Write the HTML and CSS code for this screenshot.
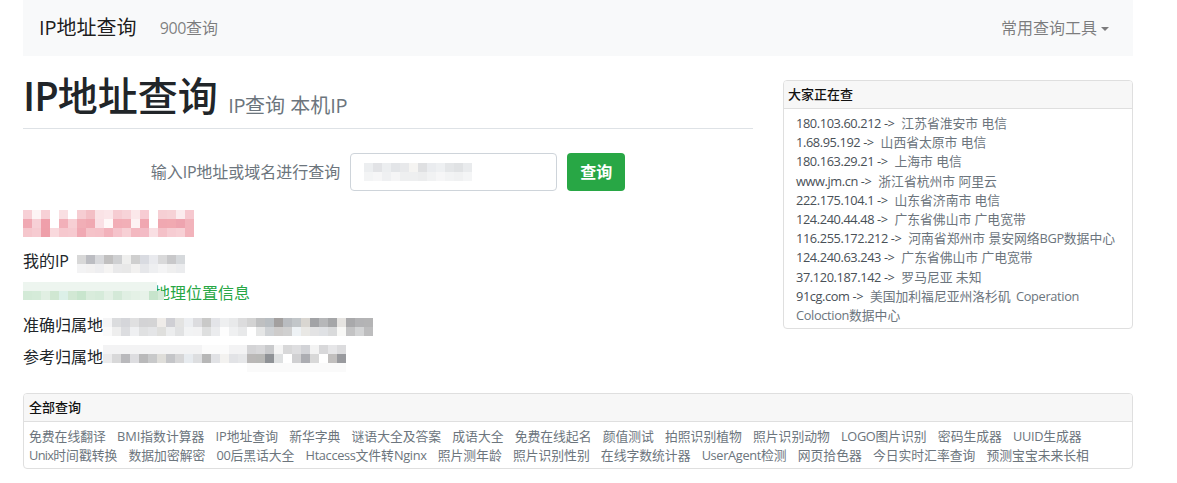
FILE: index.html
```html
<!DOCTYPE html>
<html lang="zh-CN">
<head>
<meta charset="utf-8">
<title>IP地址查询</title>
<link rel="stylesheet" href="styles.css">
</head>
<body>
<div class="container">
  <nav class="navbar">
    <a class="brand" href="#">IP地址查询</a>
    <a class="nav-link" href="#"><span class="lat">900</span>查询</a>
    <a class="nav-link tools" href="#">常用查询工具<span class="caret"></span></a>
  </nav>
  <div class="main">
    <div class="left">
      <h1 class="title"><span class="title-ip">IP</span>地址查询 <small><span class="lat">IP</span>查询 本机<span class="lat">IP</span></small></h1>
      <form class="query">
        <label class="query-label">输入<span class="lat">IP</span>地址或域名进行查询</label>
        <div class="input">
          <svg class="mosaic" width="108" height="18" viewBox="0 0 12 2" shape-rendering="crispEdges">
            <rect width="1" height="1" fill="#eceef0"/><rect x="1" width="1" height="1" fill="#e2e3e6"/><rect x="2" width="1" height="1" fill="#eceef0"/><rect x="3" width="1" height="1" fill="#e3e5e8"/><rect x="4" width="1" height="1" fill="#e8e9eb"/><rect x="5" width="1" height="1" fill="#f5f4f2"/><rect x="6" width="1" height="1" fill="#dfe0e2"/><rect x="7" width="1" height="1" fill="#eaecef"/><rect x="8" width="1" height="1" fill="#eef0f2"/><rect x="9" width="1" height="1" fill="#e4e6e8"/><rect x="10" width="1" height="1" fill="#e0e2e4"/><rect x="11" width="1" height="1" fill="#e9ebed"/>
            <rect y="1" width="1" height="1" fill="#f3f4f5"/><rect x="1" y="1" width="1" height="1" fill="#f6f6f7"/><rect x="2" y="1" width="1" height="1" fill="#eff0f2"/><rect x="3" y="1" width="1" height="1" fill="#f5f5f6"/><rect x="4" y="1" width="1" height="1" fill="#eeeff0"/><rect x="5" y="1" width="1" height="1" fill="#eeeff0"/><rect x="6" y="1" width="1" height="1" fill="#ecedee"/><rect x="7" y="1" width="1" height="1" fill="#f1f2f3"/><rect x="8" y="1" width="1" height="1" fill="#f6f6f7"/><rect x="9" y="1" width="1" height="1" fill="#f2f3f4"/><rect x="10" y="1" width="1" height="1" fill="#f0f1f2"/><rect x="11" y="1" width="1" height="1" fill="#f4f5f6"/>
          </svg>
        </div>
        <button class="btn" type="button">查询</button>
      </form>
      <svg class="mosaic red" width="171" height="27" viewBox="0 0 19 3" shape-rendering="crispEdges">
        <rect width="1" height="1" fill="#f7d0d6"/><rect x="1" width="1" height="1" fill="#fdf4f5"/><rect x="2" width="1" height="1" fill="#f7d0d6"/><rect x="3" width="1" height="1" fill="#fff"/><rect x="4" width="1" height="1" fill="#f9dfe2"/><rect x="5" width="1" height="1" fill="#fff"/><rect x="6" width="1" height="1" fill="#f6cdd2"/><rect x="7" width="1" height="1" fill="#f3bfc5"/><rect x="8" width="1" height="1" fill="#fae3e6"/><rect x="9" width="1" height="1" fill="#fbe6e9"/><rect x="10" width="1" height="1" fill="#f6ccd2"/><rect x="11" width="1" height="1" fill="#f7d3d8"/><rect x="12" width="1" height="1" fill="#fbe8ea"/><rect x="13" width="1" height="1" fill="#f7ccd3"/><rect x="14" width="1" height="1" fill="#fff"/><rect x="15" width="1" height="1" fill="#f6cfd4"/><rect x="16" width="1" height="1" fill="#f6d2d6"/><rect x="17" width="1" height="1" fill="#fbecee"/><rect x="18" width="1" height="1" fill="#f6c8cf"/>
        <rect y="1" width="1" height="1" fill="#f0a9b3"/><rect x="1" y="1" width="1" height="1" fill="#f7d0d6"/><rect x="2" y="1" width="1" height="1" fill="#ef9faa"/><rect x="3" y="1" width="1" height="1" fill="#fff"/><rect x="4" y="1" width="1" height="1" fill="#f2b0b9"/><rect x="5" y="1" width="1" height="1" fill="#f7cfd4"/><rect x="6" y="1" width="1" height="1" fill="#f1aeb6"/><rect x="7" y="1" width="1" height="1" fill="#f0a9b2"/><rect x="8" y="1" width="1" height="1" fill="#fae0e5"/><rect x="9" y="1" width="1" height="1" fill="#fff8f8"/><rect x="10" y="1" width="1" height="1" fill="#f2adb6"/><rect x="11" y="1" width="1" height="1" fill="#f2afb7"/><rect x="12" y="1" width="1" height="1" fill="#fdf2f3"/><rect x="13" y="1" width="1" height="1" fill="#f0a7b1"/><rect x="14" y="1" width="1" height="1" fill="#fff"/><rect x="15" y="1" width="1" height="1" fill="#f0a8b1"/><rect x="16" y="1" width="1" height="1" fill="#f1a9b1"/><rect x="17" y="1" width="1" height="1" fill="#eea4af"/><rect x="18" y="1" width="1" height="1" fill="#f2b3bb"/>
        <rect y="2" width="1" height="1" fill="#f5c6cc"/><rect x="1" y="2" width="1" height="1" fill="#f6cbd1"/><rect x="2" y="2" width="1" height="1" fill="#ee9fa9"/><rect x="3" y="2" width="1" height="1" fill="#f9d9dd"/><rect x="4" y="2" width="1" height="1" fill="#f6c8ce"/><rect x="5" y="2" width="1" height="1" fill="#f6cad0"/><rect x="6" y="2" width="1" height="1" fill="#f0a9b3"/><rect x="7" y="2" width="1" height="1" fill="#f5c3c9"/><rect x="8" y="2" width="1" height="1" fill="#f5c1c8"/><rect x="9" y="2" width="1" height="1" fill="#f2b2bb"/><rect x="10" y="2" width="1" height="1" fill="#f5c3cb"/><rect x="11" y="2" width="1" height="1" fill="#f7d0d5"/><rect x="12" y="2" width="1" height="1" fill="#f3b8c0"/><rect x="13" y="2" width="1" height="1" fill="#f3bbc5"/><rect x="14" y="2" width="1" height="1" fill="#f9dfe3"/><rect x="15" y="2" width="1" height="1" fill="#f4c1c8"/><rect x="16" y="2" width="1" height="1" fill="#f6ccd2"/><rect x="17" y="2" width="1" height="1" fill="#f7d0d5"/><rect x="18" y="2" width="1" height="1" fill="#f2b3bb"/>
      </svg>
      <p class="line"><span class="key">我的<span class="lat">IP</span></span>
        <svg class="mosaic after-ip" width="108" height="18" viewBox="0 0 12 2" shape-rendering="crispEdges">
          <rect width="1" height="1" fill="#d8d8d8"/><rect x="1" width="1" height="1" fill="#bcbdc2"/><rect x="2" width="1" height="1" fill="#d8d9dc"/><rect x="3" width="1" height="1" fill="#c1c0c0"/><rect x="4" width="1" height="1" fill="#cfd0d2"/><rect x="5" width="1" height="1" fill="#efefee"/><rect x="6" width="1" height="1" fill="#cfcfcf"/><rect x="7" width="1" height="1" fill="#d9dbe1"/><rect x="8" width="1" height="1" fill="#e9eaee"/><rect x="9" width="1" height="1" fill="#d9d9da"/><rect x="10" width="1" height="1" fill="#c8c8ca"/><rect x="11" width="1" height="1" fill="#d6d9dc"/>
          <rect y="1" width="1" height="1" fill="#f3f3f4"/><rect x="1" y="1" width="1" height="1" fill="#f2f1f1"/><rect x="2" y="1" width="1" height="1" fill="#eeeef0"/><rect x="3" y="1" width="1" height="1" fill="#f5f4f3"/><rect x="4" y="1" width="1" height="1" fill="#e9e9ea"/><rect x="5" y="1" width="1" height="1" fill="#e8e8e8"/><rect x="6" y="1" width="1" height="1" fill="#f2f1f0"/><rect x="7" y="1" width="1" height="1" fill="#e6e7ea"/><rect x="8" y="1" width="1" height="1" fill="#eeeff1"/><rect x="9" y="1" width="1" height="1" fill="#f4f4f5"/><rect x="10" y="1" width="1" height="1" fill="#efefef"/><rect x="11" y="1" width="1" height="1" fill="#ebecee"/>
        </svg>
      </p>
      <p class="line">
        <svg class="mosaic over-geo" width="141" height="18" viewBox="0 0 15.67 2" shape-rendering="crispEdges">
          <rect width="14.9" height="1" fill="#edf5ef"/><rect y="1" width="1" height="1" fill="#d3ead7"/><rect x="1" y="1" width="1" height="1" fill="#d5ebd9"/><rect x="2" y="1" width="1" height="1" fill="#e1efe3"/><rect x="3" y="1" width="1" height="1" fill="#d0e7d2"/><rect x="4" y="1" width="1" height="1" fill="#dcf0e8"/><rect x="5" y="1" width="1" height="1" fill="#d2e8d4"/><rect x="6" y="1" width="1" height="1" fill="#c8e5cd"/><rect x="7" y="1" width="1" height="1" fill="#d9ecdc"/><rect x="8" y="1" width="1" height="1" fill="#d6ebda"/><rect x="9" y="1" width="1" height="1" fill="#e3f0e5"/><rect x="10" y="1" width="1" height="1" fill="#d4e9d8"/><rect x="11" y="1" width="1" height="1" fill="#e0efe3"/><rect x="12" y="1" width="1" height="1" fill="#e4f1e6"/><rect x="13" y="1" width="1" height="1" fill="#e7f2e9"/><rect x="14" y="1" width="1" height="1" fill="#c7e4cc"/><rect x="15" y="1" width="1" height="1" fill="#d6ebd9"/>
        </svg><a class="geo" href="#">地理位置信息</a>
      </p>
      <p class="line"><span class="key">准确归属地</span>
        <svg class="mosaic after-exact" width="270" height="18" viewBox="0 0 30 2" shape-rendering="crispEdges">
          <rect width="1" height="1" fill="#f5f5f6"/><rect x="1" width="1" height="1" fill="#dbdcde"/><rect x="2" width="1" height="1" fill="#d5d6da"/><rect x="3" width="1" height="1" fill="#e0e0e1"/><rect x="4" width="1" height="1" fill="#d3d3d5"/><rect x="5" width="1" height="1" fill="#d4d4d5"/><rect x="6" width="1" height="1" fill="#efece9"/><rect x="7" width="1" height="1" fill="#cfcfd4"/><rect x="8" width="1" height="1" fill="#e3e3e2"/><rect x="9" width="1" height="1" fill="#eceef1"/><rect x="10" width="1" height="1" fill="#dcdcdf"/><rect x="11" width="1" height="1" fill="#c9c9c8"/><rect x="12" width="1" height="1" fill="#e3e4e8"/><rect x="13" width="1" height="1" fill="#eeeff0"/><rect x="14" width="1" height="1" fill="#e8e9ea"/><rect x="15" width="1" height="1" fill="#dcdcdd"/><rect x="16" width="1" height="1" fill="#d3d3d3"/><rect x="17" width="1" height="1" fill="#bfc0c1"/><rect x="18" width="1" height="1" fill="#b9bec2"/><rect x="19" width="1" height="1" fill="#a3a09f"/><rect x="20" width="1" height="1" fill="#b9bcc0"/><rect x="21" width="1" height="1" fill="#c2c6c9"/><rect x="22" width="1" height="1" fill="#d9d6d1"/><rect x="23" width="1" height="1" fill="#a2a3a6"/><rect x="24" width="1" height="1" fill="#b6b7b9"/><rect x="25" width="1" height="1" fill="#a5a6a8"/><rect x="26" width="1" height="1" fill="#e6e4e1"/><rect x="27" width="1" height="1" fill="#a9a9ab"/><rect x="28" width="1" height="1" fill="#b3b3b5"/><rect x="29" width="1" height="1" fill="#b4b4b5"/>
          <rect y="1" width="1" height="1" fill="#fafafa"/><rect x="1" y="1" width="1" height="1" fill="#eeeeee"/><rect x="2" y="1" width="1" height="1" fill="#dcdde0"/><rect x="3" y="1" width="1" height="1" fill="#eff0f2"/><rect x="4" y="1" width="1" height="1" fill="#e0e1e2"/><rect x="5" y="1" width="1" height="1" fill="#e4e5e7"/><rect x="6" y="1" width="1" height="1" fill="#dfdfdd"/><rect x="7" y="1" width="1" height="1" fill="#ecedee"/><rect x="8" y="1" width="1" height="1" fill="#e1e2e3"/><rect x="9" y="1" width="1" height="1" fill="#f2f3f4"/><rect x="10" y="1" width="1" height="1" fill="#f2f2f3"/><rect x="11" y="1" width="1" height="1" fill="#dedfdf"/><rect x="12" y="1" width="1" height="1" fill="#ebecee"/><rect x="13" y="1" width="1" height="1" fill="#fdfdfd"/><rect x="14" y="1" width="1" height="1" fill="#eff0f1"/><rect x="15" y="1" width="1" height="1" fill="#e8e9ea"/><rect x="16" y="1" width="1" height="1" fill="#fff"/><rect x="17" y="1" width="1" height="1" fill="#e5e6e6"/><rect x="18" y="1" width="1" height="1" fill="#cfd2d5"/><rect x="19" y="1" width="1" height="1" fill="#cecccb"/><rect x="20" y="1" width="1" height="1" fill="#d0d0d0"/><rect x="21" y="1" width="1" height="1" fill="#eef2f5"/><rect x="22" y="1" width="1" height="1" fill="#e9e8e5"/><rect x="23" y="1" width="1" height="1" fill="#e3e3e4"/><rect x="24" y="1" width="1" height="1" fill="#dfe1e4"/><rect x="25" y="1" width="1" height="1" fill="#d9dadb"/><rect x="26" y="1" width="1" height="1" fill="#f8f8f6"/><rect x="27" y="1" width="1" height="1" fill="#c3c3c4"/><rect x="28" y="1" width="1" height="1" fill="#d3d4d5"/><rect x="29" y="1" width="1" height="1" fill="#bdbdbe"/>
        </svg>
      </p>
      <p class="line"><span class="key">参考归属地</span>
        <svg class="mosaic after-ref" width="243" height="27" viewBox="0 0 27 3" shape-rendering="crispEdges">
          <rect width="16" height="1" fill="#f3f3f4"/><rect x="11" width="3" height="1" fill="#fbfbfb"/><rect x="16" width="1" height="1" fill="#d4d4d6"/><rect x="17" width="1" height="1" fill="#d8d8da"/><rect x="18" width="1" height="1" fill="#c9cacc"/><rect x="19" width="1" height="1" fill="#f5f5f5"/><rect x="20" width="1" height="1" fill="#d8d8d9"/><rect x="21" width="1" height="1" fill="#dedee0"/><rect x="22" width="1" height="1" fill="#d2d3d7"/><rect x="23" width="1" height="1" fill="#f3f3f3"/><rect x="24" width="1" height="1" fill="#d8d8da"/><rect x="25" width="1" height="1" fill="#e6e6e8"/><rect x="26" width="1" height="1" fill="#dcdcde"/>
          <rect y="1" width="1" height="1" fill="#ebebec"/><rect x="1" y="1" width="1" height="1" fill="#d8d8d9"/><rect x="2" y="1" width="1" height="1" fill="#b9b9bc"/><rect x="3" y="1" width="1" height="1" fill="#dddde0"/><rect x="4" y="1" width="1" height="1" fill="#b9b9ba"/><rect x="5" y="1" width="1" height="1" fill="#c8c9ca"/><rect x="6" y="1" width="1" height="1" fill="#dfdeda"/><rect x="7" y="1" width="1" height="1" fill="#c4c5c8"/><rect x="8" y="1" width="1" height="1" fill="#d6d6d7"/><rect x="9" y="1" width="1" height="1" fill="#e7ebef"/><rect x="10" y="1" width="1" height="1" fill="#dddee0"/><rect x="11" y="1" width="1" height="1" fill="#b7b7b7"/><rect x="12" y="1" width="1" height="1" fill="#e1e2e5"/><rect x="13" y="1" width="1" height="1" fill="#f3f2f0"/><rect x="14" y="1" width="1" height="1" fill="#e2e3e6"/><rect x="15" y="1" width="1" height="1" fill="#e6e7e9"/><rect x="16" y="1" width="1" height="1" fill="#bab8b7"/><rect x="17" y="1" width="1" height="1" fill="#b8b8b6"/><rect x="18" y="1" width="1" height="1" fill="#8f9296"/><rect x="19" y="1" width="1" height="1" fill="#dee0e1"/><rect x="20" y="1" width="1" height="1" fill="#fff"/><rect x="21" y="1" width="1" height="1" fill="#d0d0d2"/><rect x="22" y="1" width="1" height="1" fill="#acadb2"/><rect x="23" y="1" width="1" height="1" fill="#d8d8d8"/><rect x="24" y="1" width="1" height="1" fill="#fff"/><rect x="25" y="1" width="1" height="1" fill="#c1bfbe"/><rect x="26" y="1" width="1" height="1" fill="#999a9e"/>
          <rect x="16" y="2" width="11" height="1" fill="#fafafa"/>
        </svg>
      </p>
    </div>
    <aside class="card side">
      <div class="card-header">大家正在查</div>
      <ul class="recent">
        <li><a href="#">180.103.60.212 -&gt;</a> 江苏省淮安市 电信</li>
        <li><a href="#">1.68.95.192 -&gt;</a> 山西省太原市 电信</li>
        <li><a href="#">180.163.29.21 -&gt;</a> 上海市 电信</li>
        <li><a href="#">www.jm.cn -&gt;</a> 浙江省杭州市 阿里云</li>
        <li><a href="#">222.175.104.1 -&gt;</a> 山东省济南市 电信</li>
        <li><a href="#">124.240.44.48 -&gt;</a> 广东省佛山市 广电宽带</li>
        <li><a href="#">116.255.172.212 -&gt;</a> 河南省郑州市 景安网络<span class="lat">BGP</span>数据中心</li>
        <li><a href="#">124.240.63.243 -&gt;</a> 广东省佛山市 广电宽带</li>
        <li><a href="#">37.120.187.142 -&gt;</a> 罗马尼亚 未知</li>
        <li><a href="#">91cg.com -&gt;</a> 美国加利福尼亚州洛杉矶 <span class="lat coperation">Coperation</span> <span class="lat">Coloction</span>数据中心</li>
      </ul>
    </aside>
  </div>
  <section class="card all">
    <div class="card-header">全部查询</div>
    <div class="links">
      <a href="#">免费在线翻译</a><a href="#">BMI指数计算器</a><a href="#">IP地址查询</a><a href="#">新华字典</a><a href="#">谜语大全及答案</a><a href="#">成语大全</a><a href="#">免费在线起名</a><a href="#">颜值测试</a><a href="#">拍照识别植物</a><a href="#">照片识别动物</a><a href="#"><span class="lat">LOGO</span>图片识别</a><a href="#">密码生成器</a><a href="#"><span class="lat">UUID</span>生成器</a><a href="#"><span class="lat-x">Unix</span>时间戳转换</a><a href="#">数据加密解密</a><a href="#"><span class="lat">00</span>后黑话大全</a><a href="#"><span class="lat">Htaccess</span>文件转<span class="lat">Nginx</span></a><a href="#">照片测年龄</a><a href="#">照片识别性别</a><a href="#">在线字数统计器</a><a href="#"><span class="lat">UserAgent</span>检测</a><a href="#">网页拾色器</a><a href="#">今日实时汇率查询</a><a href="#">预测宝宝未来长相</a>
    </div>
  </section>
</div>
</body>
</html>
```
FILE: styles.css
```css
* { box-sizing: border-box; }
html, body { margin: 0; padding: 0; background: #fff; }
body {
  font-family: "Open Sans", "Noto Sans CJK SC", sans-serif;
  font-size: 16px;
  line-height: 1.5;
  color: #212529;
}
a { text-decoration: none; }
.lat { letter-spacing: -.35px; }
.lat-x { letter-spacing: -.7px; }
.container { width: 1110px; margin-left: 23px; }

.navbar {
  display: flex;
  align-items: center;
  height: 56px;
  padding: 0 16px;
  background: #f8f9fa;
}
.brand { font-size: 20px; color: rgba(0,0,0,.9); margin-right: 15px; }
.nav-link { color: rgba(0,0,0,.5); padding: 0 8px; }
.tools { margin-left: auto; }
.caret {
  display: inline-block;
  margin-left: 4px;
  vertical-align: 3px;
  border-top: 4.8px solid;
  border-left: 4.8px solid transparent;
  border-right: 4.8px solid transparent;
}

.main { display: flex; justify-content: space-between; align-items: flex-start; }
.left { width: 730px; }
.title {
  margin: 16px 0 0;
  padding-bottom: 1px;
  height: 57px;
  border-bottom: 1px solid #dee2e6;
  font-size: 40px;
  font-weight: 500;
  line-height: 48px;
  white-space: nowrap;
}
.title-ip { font-weight: 600; letter-spacing: -1px; }
.title small {
  position: relative;
  top: 2px;
  font-size: 20px;
  font-weight: 400;
  color: #6c757d;
}

.query { display: flex; align-items: center; justify-content: center; gap: 10px; margin-top: 24px; }
.query-label { color: #6c757d; }
.input {
  width: 207px; height: 38px;
  border: 1px solid #ced4da;
  border-radius: 4px;
  display: flex; align-items: center;
  padding-left: 13px;
}
.btn {
  width: 58px; height: 38px;
  border: 0; border-radius: 4px;
  background: #28a745;
  color: #fff;
  font: 700 16px/1.5 "Open Sans", "Noto Sans CJK SC", sans-serif;
  padding: 0;
}
.mosaic { display: block; flex: none; }
.red { margin-top: 19px; margin-bottom: 12px; }
.line { display: flex; align-items: flex-start; height: 24px; margin: 0 0 8px; white-space: nowrap; }
.after-ip { margin: 6px 0 0 9px; }
.after-exact { margin-top: 5px; }
.after-ref { margin-top: 0; }
.over-geo { position: relative; z-index: 1; margin-top: 1px; }
.geo { color: #28a745; margin-left: -10px; }

.card { border: 1px solid #dfdfdf; border-radius: 4px; background: #fff; }
.card-header {
  height: 28px;
  padding: 0 4px;
  background: #f7f7f7;
  border-bottom: 1px solid #dfdfdf;
  border-radius: 3px 3px 0 0;
  font-size: 13px;
  font-weight: 500;
  line-height: 27px;
  color: #111;
}
.side { width: 350px; margin-top: 24px; }
.recent { list-style: none; margin: 0; padding: 5px 12px 3px; font-size: 12.8px; line-height: 19.2px; color: #6c757d; }
.recent a { color: #495057; letter-spacing: -.4px; margin-right: 3.5px; }
.coperation { margin-left: 2px; }
.all { margin-top: 16px; }
.all .card-header { padding-left: 5px; }
.links { padding: 5px 5px 3px; font-size: 12.8px; line-height: 19.2px; }
.links a { color: #6c757d; margin-right: 11.2px; display: inline-block; }
```
